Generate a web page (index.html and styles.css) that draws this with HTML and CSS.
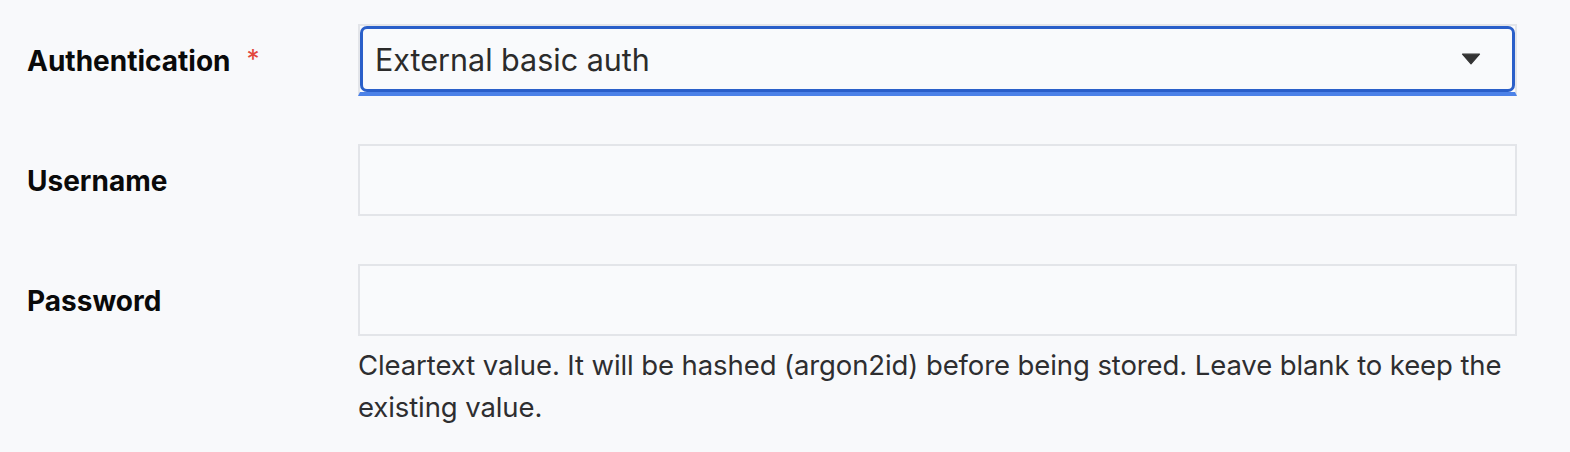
FILE: index.html
```html
<!DOCTYPE html>
<html lang="en">
<head>
<meta charset="utf-8">
<title>Authentication settings</title>
<link rel="stylesheet" href="styles.css">
</head>
<body>
<form class="form">
  <div class="label-cell"><span class="label">Authentication</span><span class="required">*</span></div>
  <div class="field">
    <div class="select">
      <div class="select-ring">
        <span class="select-value">External basic auth</span>
        <svg class="caret" width="20" height="12" viewBox="0 0 20 12" aria-hidden="true"><path d="M1.5 1.2 H18.5 L10 10.8 Z" fill="#333" stroke="#333" stroke-width="1.2" stroke-linejoin="round"/></svg>
      </div>
    </div>
  </div>

  <div class="label-cell"><span class="label">Username</span></div>
  <div class="field"><div class="input"></div></div>

  <div class="label-cell"><span class="label">Password</span></div>
  <div class="field">
    <div class="input"></div>
    <p class="help">Cleartext value. It will be hashed (argon2id) before being stored. Leave blank to keep the existing value.</p>
  </div>
</form>
</body>
</html>
```
FILE: styles.css
```css
html, body {
  margin: 0;
  padding: 0;
  background: #f8f9fb;
}
body {
  font-family: Inter, "Noto Sans", "Liberation Sans", sans-serif;
  color: #111;
}
.form {
  display: grid;
  grid-template-columns: 331px 1159px;
  row-gap: 48px;
  padding: 24px 0 0 27px;
  margin: 0;
}
.label-cell {
  height: 72px;
  display: flex;
  align-items: center;
}
.label {
  font-size: 28px;
  font-weight: 700;
  color: #0a0a0a;
  position: relative;
  top: 1px;
}
.required {
  color: #e2463c;
  font-size: 26px;
  margin-left: 16px;
  position: relative;
  top: -2px;
}
.field {
  display: flex;
  flex-direction: column;
}
.select {
  height: 72px;
  box-sizing: border-box;
  border: 2px solid #e3e5e9;
  border-bottom: 4px solid #4c82e8;
  background: #f9fafc;
}
.select-ring {
  height: 100%;
  box-sizing: border-box;
  border: 3px solid #2a5fc9;
  border-radius: 7px;
  display: flex;
  align-items: center;
  justify-content: space-between;
  padding: 0 31px 0 12px;
}
.select-value {
  font-size: 30.5px;
  color: #2b2b2b;
}
.caret {
  display: block;
}
.input {
  height: 72px;
  box-sizing: border-box;
  border: 2px solid #e3e5e9;
  background: #f9fafc;
}
.help {
  margin: 8px 0 0;
  font-size: 27.5px;
  line-height: 42px;
  color: #2e2e30;
  letter-spacing: -0.1px;
}
```
